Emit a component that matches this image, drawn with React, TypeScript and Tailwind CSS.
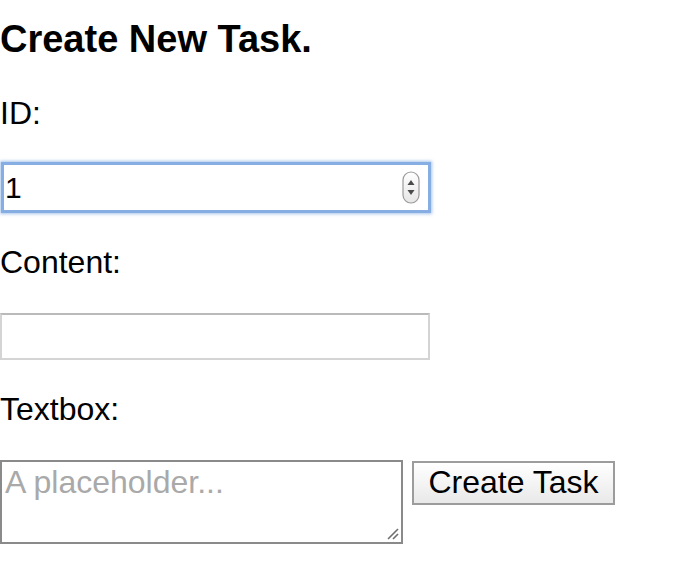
import React from "react"

function Spinner() {
  return (
    <svg
      className="absolute left-[402px] top-[171px] pointer-events-none"
      width="18"
      height="33"
      viewBox="0 0 18 33"
    >
      <defs>
        <linearGradient id="spin" x1="0" y1="0" x2="0" y2="1">
          <stop offset="0" stopColor="#ffffff" />
          <stop offset="1" stopColor="#e6e6e6" />
        </linearGradient>
      </defs>
      <rect x="1" y="1" width="16" height="31" rx="8" fill="url(#spin)" stroke="#9b9b9b" strokeWidth="1.2" />
      <path d="M9 9 L12.5 14 L5.5 14 Z" fill="#4a4a4a" />
      <path d="M9 24 L12.5 19 L5.5 19 Z" fill="#4a4a4a" />
    </svg>
  )
}

// Safari-style resize grip drawn over the textarea corner
function ResizeGrip() {
  return (
    <svg
      className="absolute right-[4px] bottom-[4px] pointer-events-none"
      width="14"
      height="14"
      viewBox="0 0 14 14"
    >
      <path d="M13 3 L3 13" stroke="#6e6e6e" strokeWidth="1.6" />
      <path d="M13 8 L8 13" stroke="#6e6e6e" strokeWidth="1.6" />
    </svg>
  )
}

export default function App() {
  return (
    <div className="relative min-h-[578px] w-[678px] bg-white text-black font-['Liberation_Sans',Arial,sans-serif]">
      <h3 className="pt-[18px] text-[38px] leading-[42px] font-bold">Create New Task.</h3>

      <div className="mt-[35px] text-[32px] leading-[36px]">ID:</div>
      <input
        type="text"
        defaultValue="1"
        className="mt-[31px] ml-[1px] block h-[51px] w-[430px] border-[3px] border-[#86aee3] px-[1px] text-[30px] text-black outline-none shadow-[0_0_3px_1px_rgba(130,172,226,0.7)] font-['Liberation_Sans',Arial,sans-serif]"
      />
      <Spinner />

      <div className="mt-[31px] text-[32px] leading-[36px]">Content:</div>
      <input
        type="text"
        className="mt-[33px] block h-[47px] w-[430px] border-2 border-[#d4d4d4] border-t-[#bababa] px-[3px] text-[30px] outline-none font-['Liberation_Sans',Arial,sans-serif]"
      />

      <div className="mt-[31px] text-[32px] leading-[36px]">Textbox:</div>
      <div className="mt-[33px] flex items-start gap-[9px]">
        <div className="relative">
          <textarea
            placeholder="A placeholder..."
            className="block h-[84px] w-[403px] resize-none border-2 border-[#8a8a8a] px-[3px] pt-[2px] text-[32px] leading-[36px] outline-none placeholder:text-[#a9a9a9] font-['Liberation_Sans',Arial,sans-serif]"
          />
          <ResizeGrip />
        </div>
        <button className="mt-[1px] h-[44px] w-[203px] border-2 border-[#9c9c9c] bg-gradient-to-b from-white to-[#e9e9e9] pb-[2px] text-[32px] leading-[34px] text-black font-['Liberation_Sans',Arial,sans-serif]">
          Create Task
        </button>
      </div>
    </div>
  )
}
